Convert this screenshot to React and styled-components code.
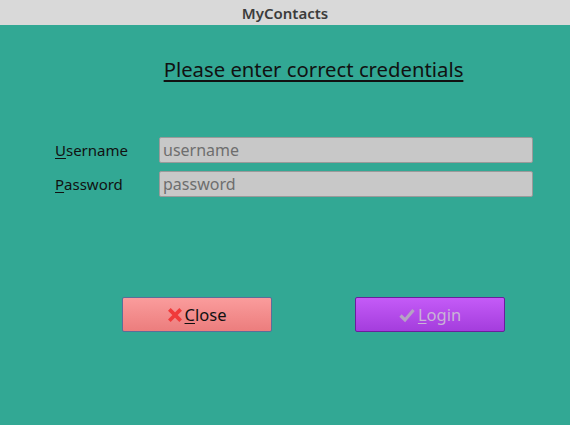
import React from 'react';
import styled, { createGlobalStyle } from 'styled-components';

const GlobalStyle = createGlobalStyle`
  html, body {
    margin: 0;
    padding: 0;
    width: 570px;
    height: 425px;
    overflow: hidden;
    background: #32a894;
    font-family: "Noto Sans", "DejaVu Sans", sans-serif;
  }
`;

export default function App() {
  return (
    <Window>
      <GlobalStyle />
      <TitleBar>MyContacts</TitleBar>
      <Content>
        <Heading>Please enter correct credentials</Heading>
        <Form>
          <Label htmlFor="user"><u>U</u>sername</Label>
          <Field id="user" placeholder="username" />
          <Label htmlFor="pass"><u>P</u>assword</Label>
          <Field id="pass" type="password" placeholder="password" />
        </Form>
        <Buttons>
          <Button $variant="close">
            <CloseIcon viewBox="0 0 16 16">
              <path d="M3 3 L13 13 M13 3 L3 13" stroke="#f03a3a" strokeWidth="4.2" strokeLinecap="square" />
            </CloseIcon>
            <span><u>C</u>lose</span>
          </Button>
          <Button $variant="login">
            <CheckIcon viewBox="0 0 16 16">
              <path d="M1.5 8.5 L6 13 L14.5 3" fill="none" stroke="#b5a3c4" strokeWidth="3.2" />
            </CheckIcon>
            <span><u>L</u>ogin</span>
          </Button>
        </Buttons>
      </Content>
    </Window>
  );
}

const Window = styled.div`
  width: 570px;
  height: 425px;
  display: flex;
  flex-direction: column;
`;

const TitleBar = styled.div`
  height: 25px;
  background: #d9d9d9;
  color: #3c3c3c;
  font-weight: 600;
  font-size: 15px;
  display: flex;
  align-items: center;
  justify-content: center;
  padding-top: 1px;
  box-sizing: border-box;
`;

const Content = styled.div`
  flex: 1;
  display: flex;
  flex-direction: column;
`;

const Heading = styled.div`
  margin: 31px 0 0 163px;
  width: 301px;
  text-align: center;
  font-size: 20.3px;
  color: #111;
  text-decoration: underline;
  text-underline-offset: 3px;
  white-space: nowrap;
  line-height: 26px;
`;

const Form = styled.div`
  margin: 55px 0 0 55px;
  display: grid;
  grid-template-columns: 104px 374px;
  row-gap: 8px;
  align-items: center;
`;

const Label = styled.label`
  font-size: 15px;
  color: #111;
  u { text-underline-offset: 2px; }
`;

const Field = styled.input`
  box-sizing: border-box;
  height: 26px;
  width: 374px;
  background: #c8c8c8;
  border: 1px solid #9a9a9a;
  border-radius: 2px;
  padding: 0 3px;
  font-family: inherit;
  font-size: 16px;
  color: #333;
  outline: none;
  &::placeholder { color: #6e6e6e; }
`;

const Buttons = styled.div`
  margin: 100px 0 0 122px;
  display: flex;
  gap: 83px;
`;

const Button = styled.button`
  box-sizing: border-box;
  width: 150px;
  height: 35px;
  border-radius: 2px;
  display: flex;
  align-items: center;
  justify-content: center;
  gap: 3px;
  font-family: inherit;
  font-size: 16.5px;
  padding: 0;
  border: 1px solid ${p => (p.$variant === 'close' ? '#5b6d99' : '#6a1f9c')};
  background: ${p =>
    p.$variant === 'close'
      ? 'linear-gradient(#fa9c9c, #ec7d7d)'
      : 'linear-gradient(#c45bf7, #a43ddd)'};
  color: ${p => (p.$variant === 'close' ? '#111' : '#c9b3d6')};
  u { text-underline-offset: 2px; }
`;

const CloseIcon = styled.svg`
  width: 14px;
  height: 14px;
`;

const CheckIcon = styled.svg`
  width: 16px;
  height: 16px;
`;
